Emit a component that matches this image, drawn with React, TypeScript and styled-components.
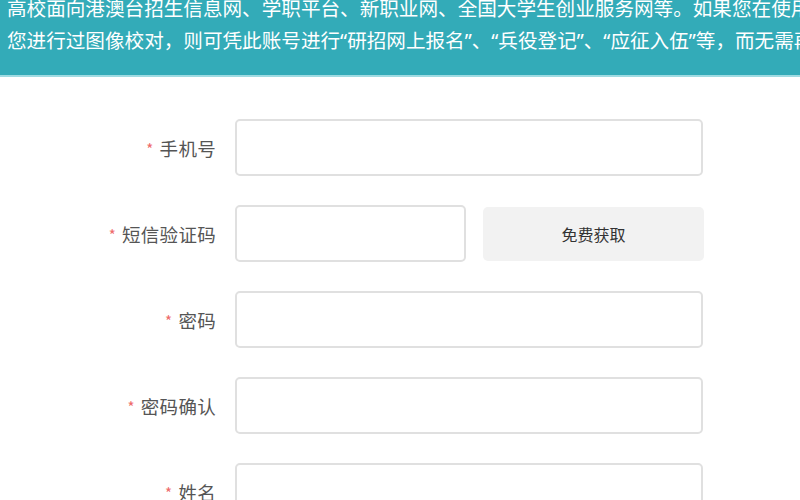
import styled, { createGlobalStyle } from 'styled-components';

const GlobalStyle = createGlobalStyle`
  html, body {
    margin: 0;
    padding: 0;
    background: #fff;
  }
  body {
    font-family: 'Noto Sans CJK SC', 'Noto Sans', sans-serif;
  }
`;

const PageStyled = styled.div`
  width: 800px;
  height: 500px;
  overflow: hidden;
`;

const BannerStyled = styled.div`
  height: 77px;
  box-sizing: border-box;
  background: #33abb8;
  border-bottom: 2px solid #9fdbe2;
  color: #fff;
  display: flex;
  flex-direction: column;
  justify-content: flex-end;
  padding: 0 0 18px 7px;
  overflow: hidden;
  font-family: 'Noto Sans', 'Noto Sans CJK SC', sans-serif;
  font-size: 19.6px;
  line-height: 32px;
  white-space: nowrap;
`;

const FormStyled = styled.form`
  display: flex;
  flex-direction: column;
  gap: 29px;
  padding-top: 42px;
`;

const RowStyled = styled.div`
  display: grid;
  grid-template-columns: 216px 468px;
  column-gap: 19px;
  align-items: center;
`;

const LabelStyled = styled.label`
  text-align: right;
  font-size: 18.5px;
  color: #555;
  letter-spacing: 0.3px;

  .required {
    color: #ee6a6a;
    font-size: 15px;
    margin-right: 6px;
    position: relative;
    top: -1px;
  }
`;

const InputStyled = styled.input`
  box-sizing: border-box;
  width: 100%;
  height: 57px;
  border: 2px solid #e0e0e0;
  border-radius: 5px;
  outline: none;
  background: #fff;
  font-size: 16px;
  padding: 0 12px;
`;

const CodeFieldStyled = styled.div`
  display: grid;
  grid-template-columns: 231px 221px;
  column-gap: 17px;
  align-items: center;
`;

const CodeButtonStyled = styled.button`
  height: 54px;
  border: none;
  border-radius: 5px;
  background: #f2f2f2;
  color: #333;
  font-family: inherit;
  font-size: 16px;
  cursor: pointer;
`;

const fields = [
  { name: 'phone', label: '手机号' },
  { name: 'code', label: '短信验证码', withCode: true },
  { name: 'password', label: '密码', type: 'password' },
  { name: 'confirm', label: '密码确认', type: 'password' },
  { name: 'realName', label: '姓名' },
];

const App = () => {
  return (
    <>
      <GlobalStyle />
      <PageStyled>
        <BannerStyled>
          <div>高校面向港澳台招生信息网、学职平台、新职业网、全国大学生创业服务网等。如果您在使用过程中</div>
          <div>您进行过图像校对，则可凭此账号进行“研招网上报名”、“兵役登记”、“应征入伍”等，而无需再次注册</div>
        </BannerStyled>
        <FormStyled onSubmit={(e) => e.preventDefault()}>
          {fields.map((field) => (
            <RowStyled key={field.name}>
              <LabelStyled htmlFor={field.name}>
                <span className="required">*</span>
                {field.label}
              </LabelStyled>
              {field.withCode ? (
                <CodeFieldStyled>
                  <InputStyled id={field.name} autoComplete="off" />
                  <CodeButtonStyled type="button">免费获取</CodeButtonStyled>
                </CodeFieldStyled>
              ) : (
                <InputStyled id={field.name} type={field.type || 'text'} autoComplete="off" />
              )}
            </RowStyled>
          ))}
        </FormStyled>
      </PageStyled>
    </>
  );
};

export default App;
